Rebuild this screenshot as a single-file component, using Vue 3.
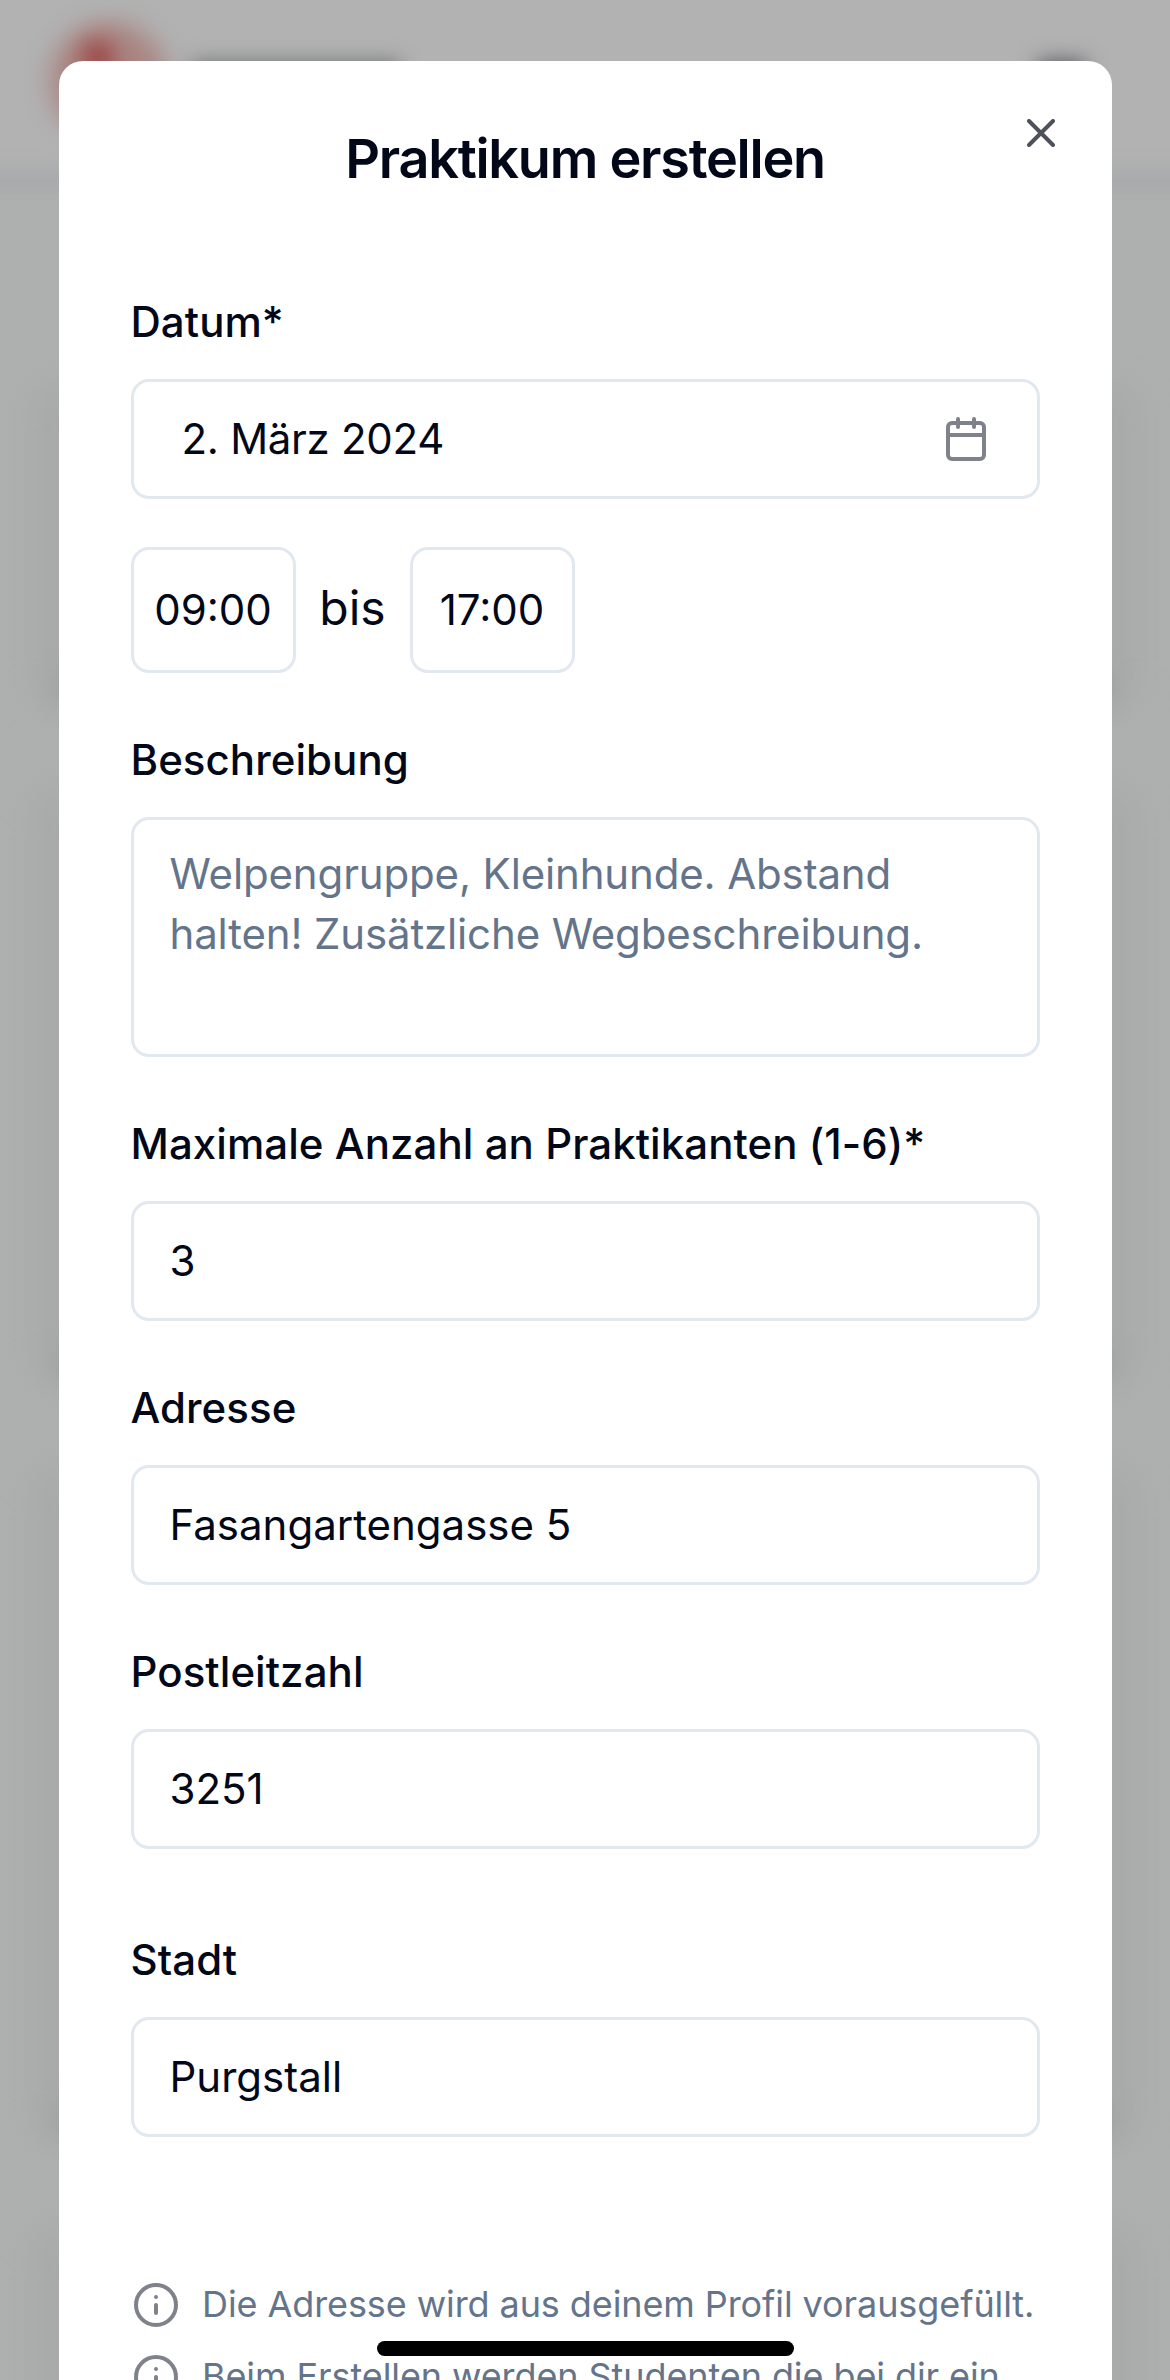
<script setup>
const fields = [
  { label: 'Maximale Anzahl an Praktikanten (1-6)*', value: '3' },
  { label: 'Adresse', value: 'Fasangartengasse 5' },
  { label: 'Postleitzahl', value: '3251' },
  { label: 'Stadt', value: 'Purgstall', spaced: true },
]
const notes = [
  'Die Adresse wird aus deinem Profil vorausgefüllt.',
  'Beim Erstellen werden Studenten die bei dir ein',
]
</script>

<template>
  <div class="screen">
    <div class="backdrop" aria-hidden="true">
      <div class="page-header">
        <i class="blob logo"></i>
        <i class="blob logo-core"></i>
        <i class="blob brand"></i>
        <i class="blob menu"></i>
      </div>
      <i class="blob header-line"></i>
      <i class="blob card first"></i>
      <i class="blob card second"></i>
      <i class="blob card third"></i>
      <i class="blob card fourth"></i>
      <i class="blob action one"></i>
      <i class="blob action two"></i>
      <i class="blob action three"></i>
    </div>

    <main class="dialog">
      <svg class="icon close" viewBox="0 0 24 24"><path d="M18 6 6 18M6 6l12 12" /></svg>
      <h1>Praktikum erstellen</h1>

      <section class="field">
        <div class="label">Datum*</div>
        <div class="input date">
          <span>2. März 2024</span>
          <svg class="icon faded" viewBox="0 0 24 24">
            <rect x="3" y="4" width="18" height="18" rx="2" />
            <path d="M16 2v4M8 2v4M3 10h18" />
          </svg>
        </div>
      </section>

      <div class="times">
        <div class="input time">09:00</div>
        <span class="until">bis</span>
        <div class="input time">17:00</div>
      </div>

      <section class="field">
        <div class="label">Beschreibung</div>
        <div class="input area">Welpengruppe, Kleinhunde. Abstand halten! Zusätzliche Wegbeschreibung.</div>
      </section>

      <section v-for="f in fields" :key="f.label" class="field" :class="{ spaced: f.spaced }">
        <div class="label">{{ f.label }}</div>
        <div class="input">{{ f.value }}</div>
      </section>

      <ul class="notes">
        <li v-for="n in notes" :key="n">
          <svg class="icon faded" viewBox="0 0 24 24">
            <circle cx="12" cy="12" r="10" />
            <path d="M12 16v-4M12 8h.01" />
          </svg>
          <span>{{ n }}</span>
        </li>
      </ul>
    </main>

    <div class="home-bar"></div>
  </div>
</template>

<style>
body {
  background: #aeafaf;
}
</style>

<style scoped>
.screen {
  position: relative;
  width: 1170px;
  height: 2380px;
  box-sizing: border-box;
  padding: 61px 58.5px 0;
  overflow: hidden;
  background: #aeafaf;
  color: #020817;
  font-family: Inter, sans-serif;
}
.backdrop {
  position: absolute;
  inset: 0;
}
.page-header {
  height: 178px;
  background: #b2b2b2;
}
.blob {
  position: absolute;
  display: block;
}
.logo {
  left: 50px;
  top: 22px;
  width: 118px;
  height: 118px;
  border-radius: 50%;
  background: #a98582;
  filter: blur(12px);
}
.logo-core {
  left: 82px;
  top: 40px;
  width: 32px;
  height: 36px;
  border-radius: 50%;
  background: #9c4441;
  filter: blur(11px);
}
.brand {
  left: 192px;
  top: 62px;
  width: 208px;
  height: 30px;
  background: #6e7070;
  filter: blur(10px);
}
.menu {
  left: 1038px;
  top: 60px;
  width: 48px;
  height: 40px;
  background: #5c5d63;
  filter: blur(10px);
}
.header-line {
  left: -30px;
  top: 171px;
  width: 1230px;
  height: 16px;
  background: #a6a8aa;
  filter: blur(9px);
}
.card {
  left: 34px;
  width: 1102px;
  border-radius: 24px;
  background: #a8a9a9;
  filter: blur(17px);
}
.first { top: 385px; height: 320px; }
.second { top: 790px; height: 590px; }
.third { top: 1470px; height: 670px; }
.fourth { top: 2230px; height: 300px; }
.action {
  left: 62px;
  width: 1046px;
  height: 26px;
  background: #959998;
  filter: blur(12px);
}
.one { top: 675px; }
.two { top: 1353px; }
.three { top: 2106px; }

.dialog {
  position: relative;
  height: 2400px;
  box-sizing: border-box;
  padding: 62px 72px 0;
  border-radius: 24px;
  background: #fff;
}
.icon {
  width: 48px;
  height: 48px;
  flex: none;
  fill: none;
  stroke: #020817;
  stroke-width: 2;
  stroke-linecap: round;
  stroke-linejoin: round;
}
.faded {
  opacity: 0.5;
}
.close {
  position: absolute;
  top: 48px;
  right: 46.5px;
  opacity: 0.7;
}
h1 {
  margin: 0 0 97px;
  height: 72px;
  text-align: center;
  font-size: 54px;
  font-weight: 600;
  line-height: 72px;
  letter-spacing: -1.25px;
}
.field {
  margin-bottom: 57px;
}
.label {
  height: 60px;
  margin-bottom: 27px;
  font-size: 42px;
  font-weight: 500;
  line-height: 60px;
  letter-spacing: 0.06px;
}
.input {
  height: 120px;
  box-sizing: border-box;
  padding: 0 36px;
  border: 3px solid #e2e8f0;
  border-radius: 18px;
  font-size: 42px;
  line-height: 114px;
}
.date {
  display: flex;
  align-items: center;
  justify-content: space-between;
  padding: 0 47px 0 48px;
  letter-spacing: -0.3px;
}
.times {
  display: flex;
  align-items: center;
  margin: -9px 0 57px;
}
.time {
  width: 165px;
  height: 126px;
  padding: 0;
  text-align: center;
  line-height: 120px;
}
.until {
  width: 114px;
  padding-bottom: 4px;
  text-align: center;
  font-size: 48px;
  line-height: 72px;
}
.area {
  height: 240px;
  padding: 24px 36px;
  line-height: 60px;
  letter-spacing: -0.15px;
  color: #64748b;
}
.spaced {
  margin-top: 81px;
}
.notes {
  margin: 132px 0 0;
  padding: 0;
  list-style: none;
}
.notes li {
  display: flex;
  align-items: center;
  gap: 22px;
  height: 72px;
  padding-left: 1.5px;
  font-size: 36px;
  letter-spacing: -0.09px;
  color: #64748b;
  white-space: nowrap;
}
.notes span {
  padding-bottom: 2px;
}
.home-bar {
  position: absolute;
  left: 377px;
  top: 2341px;
  width: 417px;
  height: 15px;
  border-radius: 8px;
  background: #000;
}
</style>
